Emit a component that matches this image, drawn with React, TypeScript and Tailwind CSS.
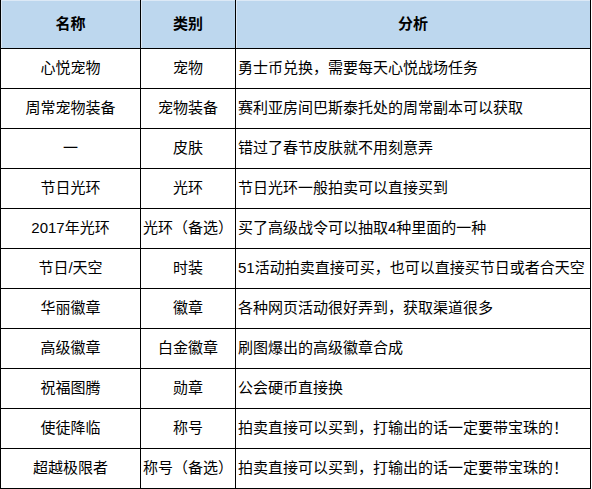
import type { ReactElement } from "react";

type Row = {
  name: string;
  kind: string;
  note: string;
};

const rows: Row[] = [
  { name: "心悦宠物", kind: "宠物", note: "勇士币兑换，需要每天心悦战场任务" },
  { name: "周常宠物装备", kind: "宠物装备", note: "赛利亚房间巴斯泰托处的周常副本可以获取" },
  { name: "一", kind: "皮肤", note: "错过了春节皮肤就不用刻意弄" },
  { name: "节日光环", kind: "光环", note: "节日光环一般拍卖可以直接买到" },
  { name: "2017年光环", kind: "光环（备选）", note: "买了高级战令可以抽取4种里面的一种" },
  { name: "节日/天空", kind: "时装", note: "51活动拍卖直接可买，也可以直接买节日或者合天空" },
  { name: "华丽徽章", kind: "徽章", note: "各种网页活动很好弄到，获取渠道很多" },
  { name: "高级徽章", kind: "白金徽章", note: "刷图爆出的高级徽章合成" },
  { name: "祝福图腾", kind: "勋章", note: "公会硬币直接换" },
  { name: "使徒降临", kind: "称号", note: "拍卖直接可以买到，打输出的话一定要带宝珠的！" },
  { name: "超越极限者", kind: "称号（备选）", note: "拍卖直接可以买到，打输出的话一定要带宝珠的！" }
];

const font = "font-['Liberation_Sans','Noto_Sans_CJK_SC',sans-serif]";

export default function App(): ReactElement {
  return (
    <div className={`w-[592px] h-[489px] bg-white text-[15px] text-black ${font}`}>
      <div className="w-[591px] border-l border-black">
        <div className="grid grid-cols-[140px_95px_355px] bg-[#bdd7ee] font-bold">
          <div className="flex h-[49px] items-center justify-center border-r border-b border-black shadow-[inset_1px_1px_0_#dce9f6]">
            名称
          </div>
          <div className="flex h-[49px] items-center justify-center border-r border-b border-black shadow-[inset_1px_1px_0_#dce9f6]">
            类别
          </div>
          <div className="flex h-[49px] items-center justify-center border-r border-b border-black shadow-[inset_1px_1px_0_#dce9f6]">
            分析
          </div>
        </div>
        {rows.map((row) => (
          <div key={row.name + row.kind} className="grid grid-cols-[140px_95px_355px]">
            <div className="flex h-[40px] items-center justify-center border-r border-b border-black">
              {row.name}
            </div>
            <div className="flex h-[40px] items-center justify-center whitespace-nowrap border-r border-b border-black">
              {row.kind}
            </div>
            <div className="flex h-[40px] items-center whitespace-nowrap border-r border-b border-black pl-[2px]">
              {row.note}
            </div>
          </div>
        ))}
      </div>
    </div>
  );
}
